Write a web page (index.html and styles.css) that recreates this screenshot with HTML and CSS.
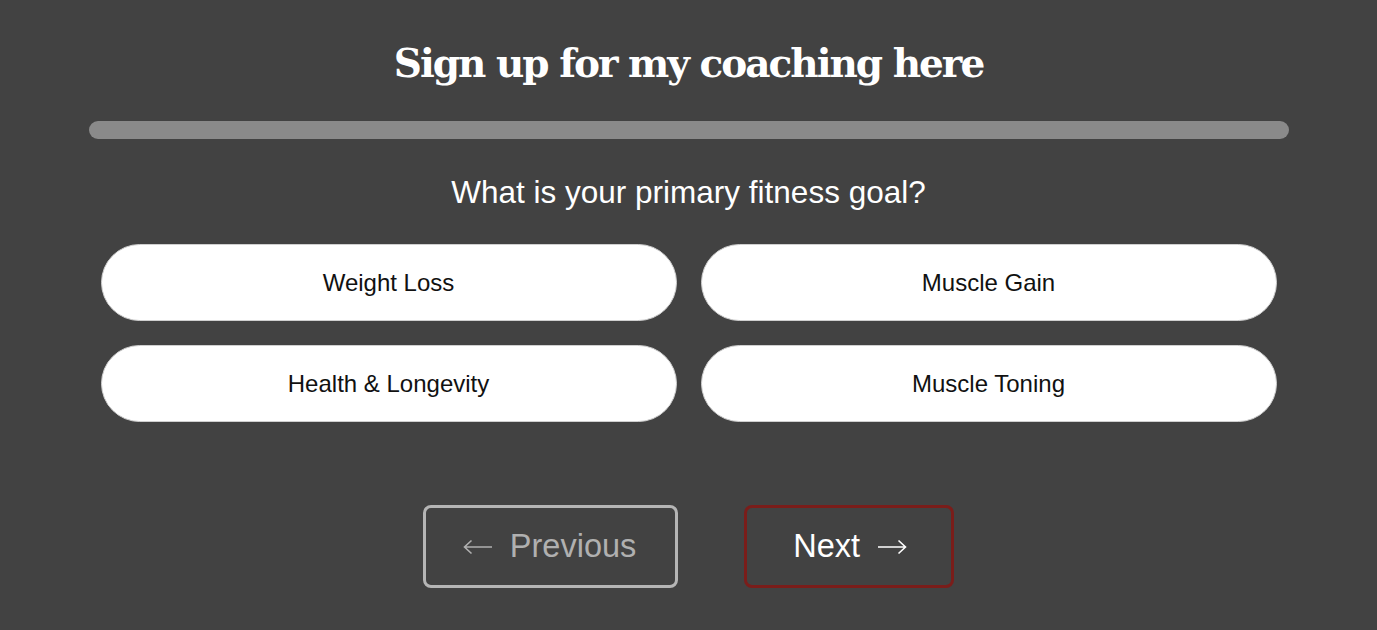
FILE: index.html
```html
<!DOCTYPE html>
<html>
<head>
    <meta charset="UTF-8">
    <title>Coaching Sign Up</title>
    <link rel="stylesheet" href="styles.css">
</head>
<body>
    <div class="container">
        <h1>Sign up for my coaching here</h1>

        <div class="progress"><div class="progress-fill"></div></div>

        <div class="step">
            <h2>What is your primary fitness goal?</h2>
            <div class="options">
                <button class="option">Weight Loss</button>
                <button class="option">Muscle Gain</button>
                <button class="option">Health &amp; Longevity</button>
                <button class="option">Muscle Toning</button>
            </div>
        </div>

        <div class="nav">
            <button class="nav-btn prev">
                <svg class="arrow" width="30" height="16" viewBox="0 0 30 16"><path d="M29 8H1.5M8.5 1.5L1.5 8l7 6.5" fill="none" stroke="currentColor" stroke-width="1.6"/></svg>
                Previous
            </button>
            <button class="nav-btn next">
                Next
                <svg class="arrow" width="30" height="16" viewBox="0 0 30 16"><path d="M1 8h27.5M21.5 1.5l7 6.5-7 6.5" fill="none" stroke="currentColor" stroke-width="1.6"/></svg>
            </button>
        </div>
    </div>
</body>
</html>
```

FILE: styles.css
```css
body {
    margin: 0;
    background-color: #424242;
    font-family: "Liberation Sans", Arial, sans-serif;
    color: white;
}
.container {
    width: 1200px;
    margin: 0 auto;
    padding-top: 38px;
}
h1 {
    margin: 0;
    font-family: "DejaVu Serif", serif;
    font-weight: bold;
    font-size: 39px;
    line-height: 50px;
    text-align: center;
    letter-spacing: -2px;
}
.progress {
    margin-top: 33px;
    height: 18px;
    border-radius: 9px;
    background-color: #8a8a8a;
}
.progress-fill {
    width: 0;
    height: 100%;
}
.step {
    padding: 0 12px;
}
h2 {
    margin: 35px 0 0;
    font-weight: normal;
    font-size: 31.5px;
    line-height: 36px;
    text-align: center;
}
.options {
    display: grid;
    grid-template-columns: 1fr 1fr;
    gap: 24px;
    margin-top: 34px;
}
.option {
    height: 77px;
    border: 1px solid #cfcfcf;
    border-radius: 39px;
    background: white;
    color: #111;
    font-family: "Liberation Sans", Arial, sans-serif;
    font-size: 24px;
    cursor: pointer;
}
.nav {
    display: flex;
    justify-content: center;
    gap: 66px;
    margin-top: 83px;
}
.nav-btn {
    display: inline-flex;
    align-items: center;
    gap: 17px;
    height: 83px;
    box-sizing: border-box;
    border: 3px solid;
    border-radius: 8px;
    background: transparent;
    font-family: "Liberation Sans", Arial, sans-serif;
    font-size: 32.5px;
    cursor: pointer;
}
.prev {
    padding: 0 39px 0 37px;
    border-color: #b5b5b5;
    color: #b0b0b0;
}
.next {
    padding: 0 44px 0 46px;
    border-color: #7a1d1a;
    color: white;
}
.arrow {
    display: block;
}
```
